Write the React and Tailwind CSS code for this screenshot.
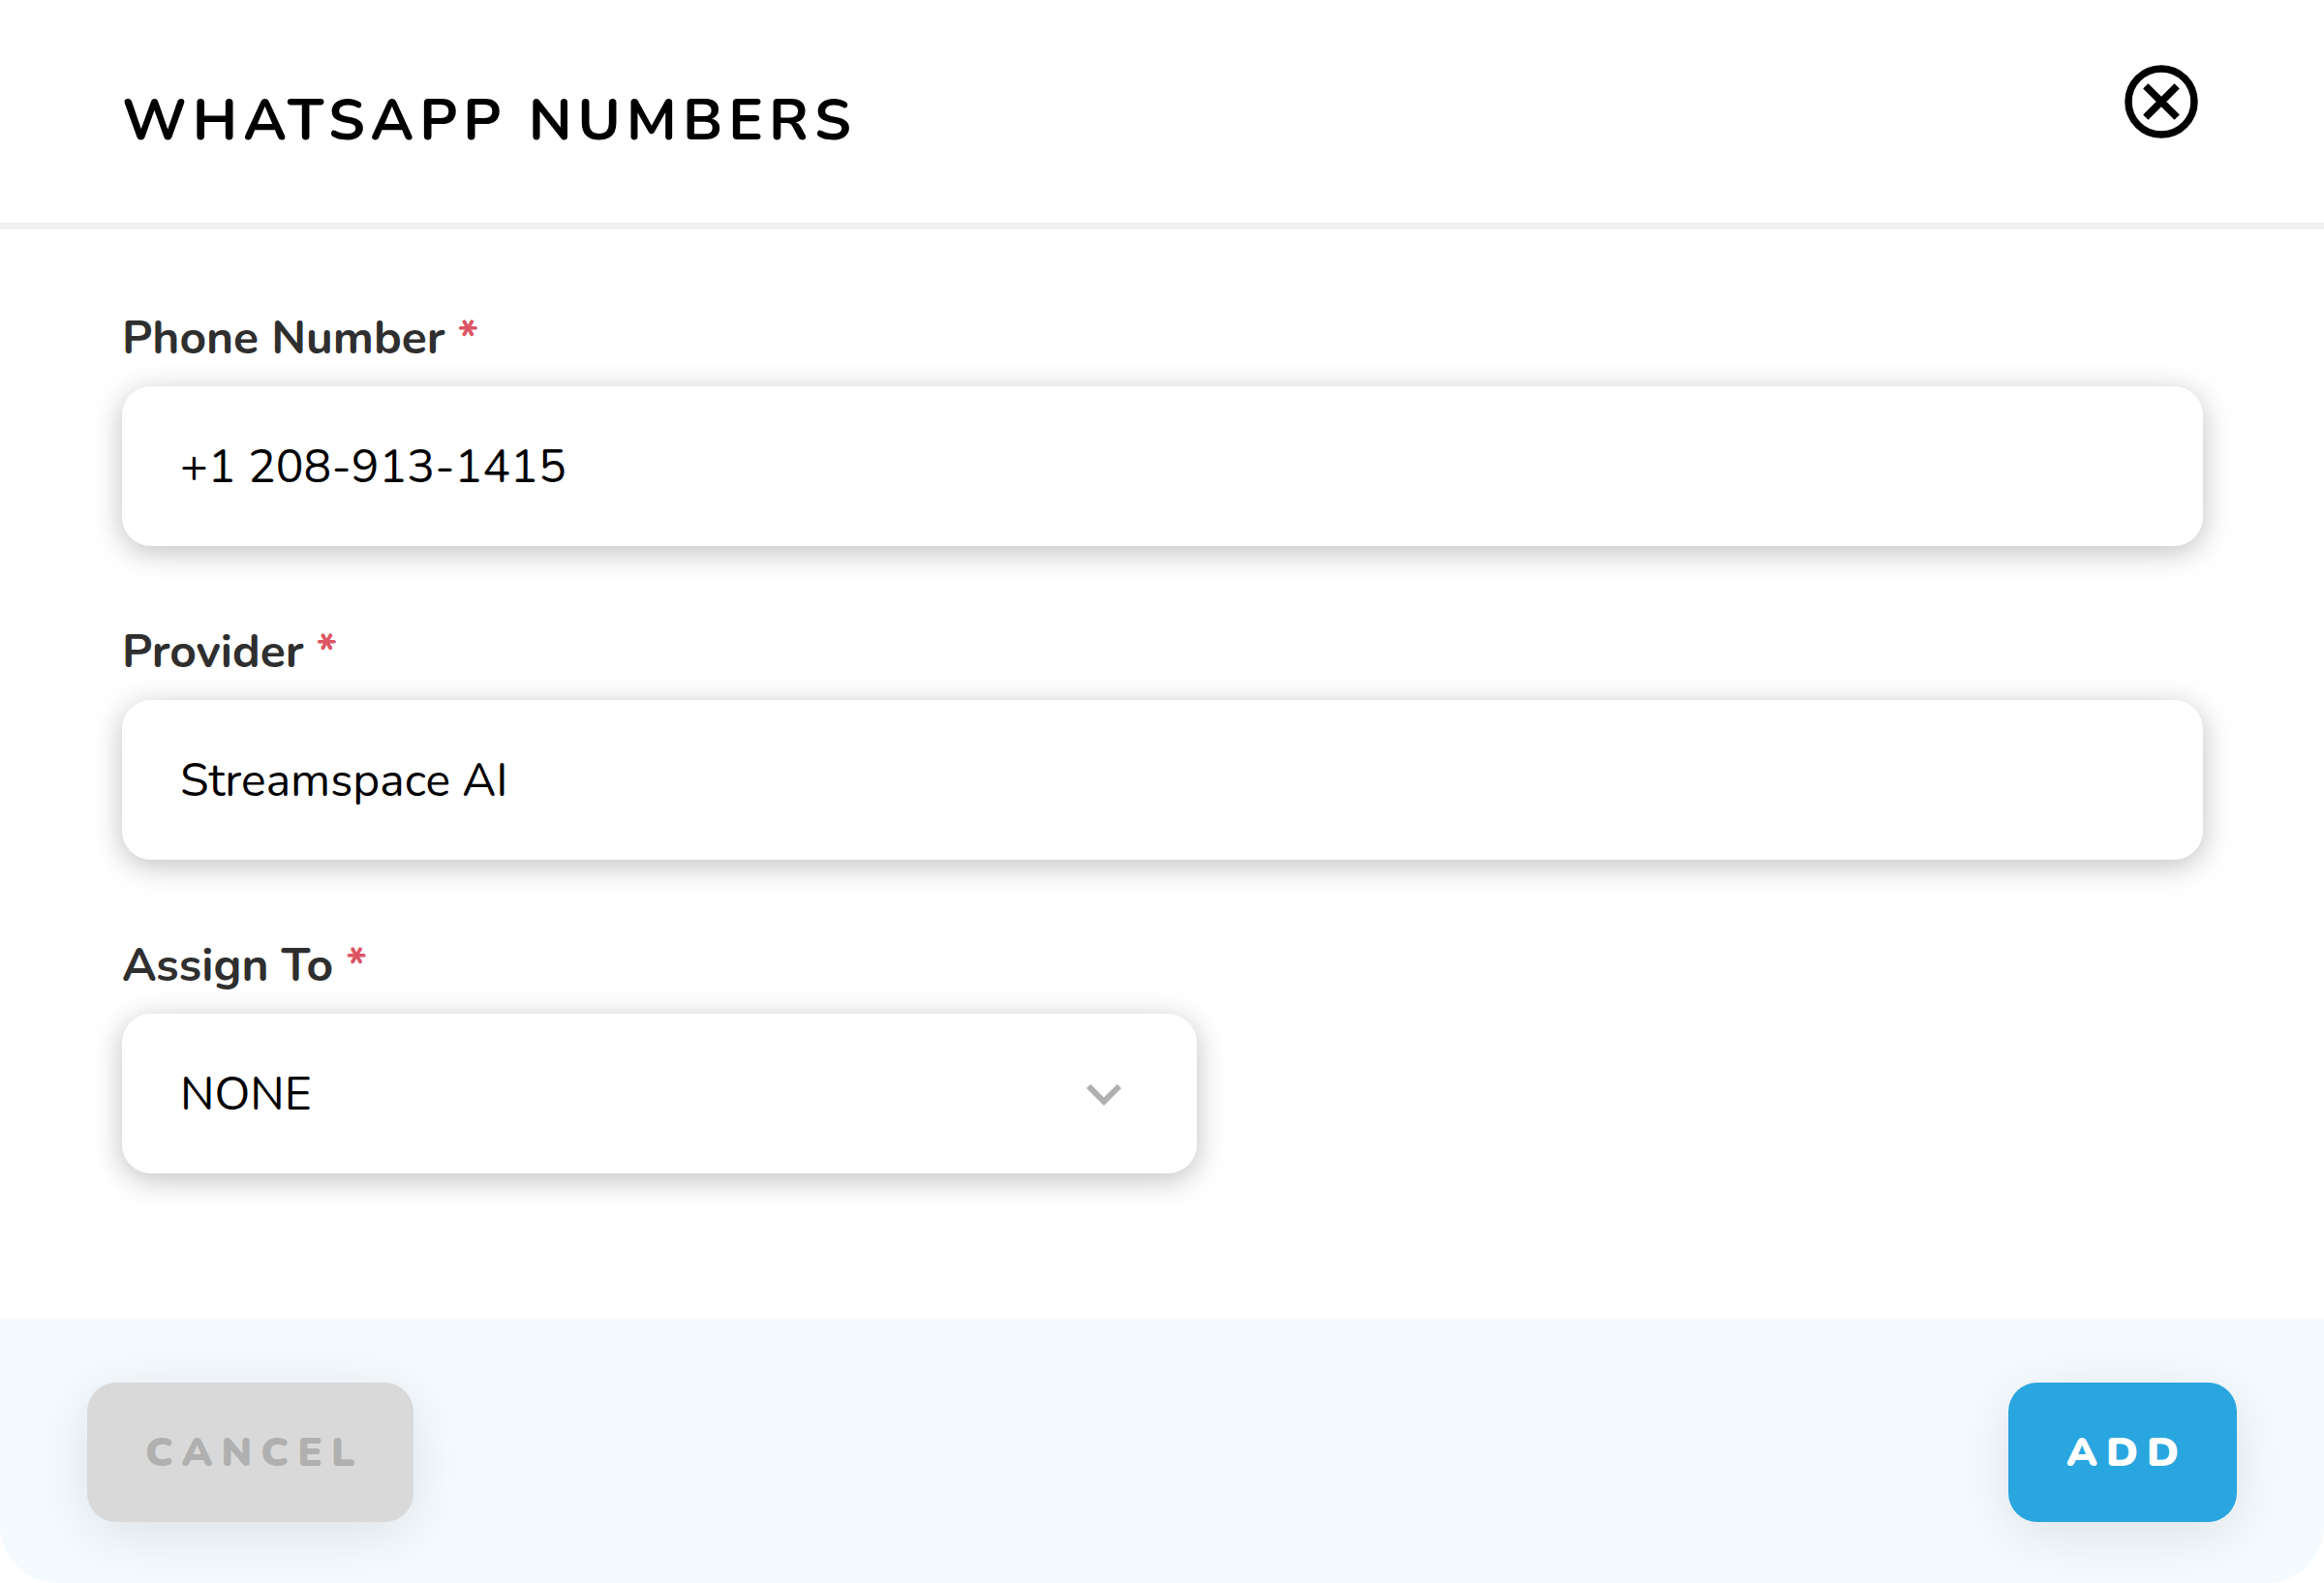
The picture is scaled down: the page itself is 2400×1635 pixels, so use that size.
import React, { useState } from "react";
import { MdExpandMore } from "react-icons/md";

const inputClass =
  "h-[165px] w-full rounded-[30px] bg-white px-[60px] text-5xl text-black outline-none shadow-[0_6px_30px_rgba(0,0,0,0.25)]";

const Field = ({ id, label, children }) => (
  <div className="flex flex-col">
    <label htmlFor={id} className="mb-[26px] text-5xl font-bold text-[#2f2f2f]">
      {label} <span className="text-[#dc5564]">*</span>
    </label>
    {children}
  </div>
);

const CloseIcon = () => (
  <svg viewBox="0 0 76 76" className="size-[76px]" fill="none" stroke="currentColor" strokeWidth="7.5">
    <circle cx="38" cy="38" r="34" />
    <path d="M21.8 21.8l32.4 32.4M54.2 21.8L21.8 54.2" />
  </svg>
);

const App = () => {
  const [phone, setPhone] = useState("+1 208-913-1415");
  const [provider, setProvider] = useState("Streamspace AI");
  const [assignTo, setAssignTo] = useState("NONE");

  const handleSubmit = (e) => {
    e.preventDefault();
  };

  return (
    <form
      className="flex min-h-screen flex-col bg-white font-[Nunito,Lato,sans-serif]"
      onSubmit={handleSubmit}
    >
      {/* Header */}
      <header className="flex items-start justify-between border-b-[7px] border-[#f1f1f1] pt-[67px] pr-[130px] pb-16 pl-[126px]">
        <h1 className="pt-[15px] text-[60px] leading-[84px] font-bold tracking-[6px] text-black">
          WHATSAPP NUMBERS
        </h1>
        <button type="button" aria-label="Close" className="text-black">
          <CloseIcon />
        </button>
      </header>

      {/* Fields */}
      <main className="flex grow flex-col gap-[85px] pt-[88px] pr-[125px] pb-[150px] pl-[126px]">
        <Field id="phone" label="Phone Number">
          <input
            id="phone"
            type="text"
            className={inputClass}
            value={phone}
            onChange={(e) => setPhone(e.target.value)}
          />
        </Field>
        <Field id="provider" label="Provider">
          <input
            id="provider"
            type="text"
            className={inputClass}
            value={provider}
            onChange={(e) => setProvider(e.target.value)}
          />
        </Field>
        <Field id="assign" label="Assign To">
          <div className="relative w-full max-w-[1110px]">
            <select
              id="assign"
              className={`${inputClass} appearance-none`}
              value={assignTo}
              onChange={(e) => setAssignTo(e.target.value)}
            >
              <option value="NONE">NONE</option>
            </select>
            <MdExpandMore className="pointer-events-none absolute inset-y-0 right-[60px] my-auto size-[72px] text-[#b0b0b0]" />
          </div>
        </Field>
      </main>

      {/* Footer */}
      <footer className="flex items-center justify-between rounded-b-[60px] bg-[#f5faff] px-[90px] pt-[66px] pb-[63px]">
        <button
          type="button"
          className="h-36 rounded-[30px] bg-[#d9d9d9] pr-[51px] pl-[60px] text-[42px] font-black tracking-[9px] text-[#b0b0b0] shadow-[0_12px_60px_rgba(0,0,0,0.1)]"
        >
          CANCEL
        </button>
        <button
          type="submit"
          className="h-36 rounded-[30px] bg-[#29a6df] pr-[51px] pl-[60px] text-[42px] font-black tracking-[9px] text-white shadow-[0_12px_60px_rgba(0,0,0,0.1)]"
        >
          ADD
        </button>
      </footer>
    </form>
  );
};

export default App;
